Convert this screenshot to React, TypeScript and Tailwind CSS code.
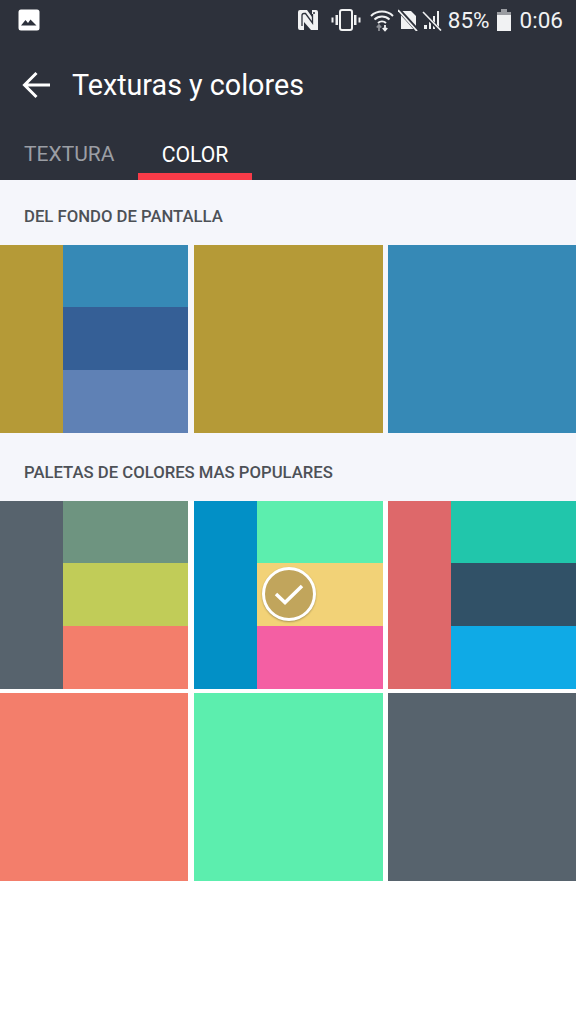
const Mixed = ({ a, b, c, d }: { a: string; b: string; c: string; d: string }) => (
  <div className="flex h-full w-full">
    <div className={`w-1/3 ${a}`} />
    <div className="flex flex-1 flex-col">
      <div className={`h-[62px] ${b}`} />
      <div className={`h-[63px] ${c}`} />
      <div className={`flex-1 ${d}`} />
    </div>
  </div>
);

const Row = ({ children }: { children: React.ReactNode }) => (
  <div className="grid h-[188px] grid-cols-[188px_189px_188px] gap-x-[5.5px]">{children}</div>
);

const StatusBar = () => (
  <div className="flex h-[40px] items-center justify-between pl-[18px] pr-[13px] text-[#f1f2f3]">
    <svg width="22" height="22" viewBox="0 0 22 22">
      <rect x="0.5" y="0.5" width="21" height="21" rx="2.5" fill="#fff" />
      <path d="M3 16.5 L7.5 11 L10 14 L12.5 10.5 L18.5 16.5 Z" fill="#2d313b" />
    </svg>
    <div className="flex items-center">
      <svg width="22" height="22" viewBox="0 0 22 22" className="mr-[12px]">
        <path d="M3 1 H10 L15 8 V1 H19 Q21 1 21 3 V21 H14 L7 13 V21 H3 Q1 21 1 19 V3 Q1 1 3 1 Z" fill="#f1f2f3" />
        <path d="M5 17 V6.5 Q5 4.5 7 4.5 H8.5 L15.5 14 V5 M16 4 H18" fill="none" stroke="#2d313b" strokeWidth="1.3" />
      </svg>
      <svg width="30" height="24" viewBox="0 0 30 24" className="mr-[9px]">
        <rect x="9" y="2" width="12" height="20" rx="2" fill="none" stroke="#f1f2f3" strokeWidth="2" />
        <rect x="4.5" y="7" width="2.5" height="10" fill="#f1f2f3" />
        <rect x="23" y="7" width="2.5" height="10" fill="#f1f2f3" />
        <rect x="0.5" y="9.5" width="2" height="5" fill="#f1f2f3" />
        <rect x="27.5" y="9.5" width="2" height="5" fill="#f1f2f3" />
      </svg>
      <svg width="24" height="24" viewBox="0 0 24 24" className="mr-[4px]">
        <path d="M1 8 A16 16 0 0 1 23 8 M4.5 11.5 A11 11 0 0 1 19.5 11.5 M8 15 A6 6 0 0 1 16 15" fill="none" stroke="#f1f2f3" strokeWidth="2" />
        <path d="M9 23 V18 M6.8 19.5 L9 17 L11.2 19.5" fill="none" stroke="#8d9096" strokeWidth="1.8" />
        <path d="M15 17 V22 M12.8 20 L15 22.5 L17.2 20" fill="none" stroke="#f1f2f3" strokeWidth="1.8" />
      </svg>
      <svg width="20" height="22" viewBox="0 0 20 22" className="mr-[4px]">
        <path d="M3 2 H13 L18 7 V20 H3 Z" fill="#f1f2f3" />
        <path d="M0 0 L19 21" stroke="#2d313b" strokeWidth="4" />
        <path d="M0 1 L19 22" stroke="#f1f2f3" strokeWidth="1.8" />
      </svg>
      <svg width="21" height="22" viewBox="0 0 21 22" className="mr-[5px]">
        <path d="M2 20 H5 V16 H2 Z M7 20 H9 V11 H7 Z M11 20 H13 V7 H11 Z M15 20 H17 V2 H15 Z" fill="#f1f2f3" />
        <path d="M0 3 L18 21.5" stroke="#2d313b" strokeWidth="3.4" />
        <path d="M1 3 L19 21.5" stroke="#f1f2f3" strokeWidth="1.6" />
      </svg>
      <span className="mr-[6px] font-['Roboto',sans-serif] text-[22.5px] leading-none">85%</span>
      <svg width="16" height="24" viewBox="0 0 16 24" className="mr-[8px]">
        <rect x="5" y="1" width="6" height="3" fill="#9a9ca1" />
        <rect x="1" y="4" width="14" height="3" fill="#9a9ca1" />
        <rect x="1" y="7" width="14" height="16" fill="#f1f2f3" />
      </svg>
      <span className="font-['Roboto',sans-serif] text-[22.5px] leading-none">0:06</span>
    </div>
  </div>
);

export default function App() {
  return (
    <div className="min-h-[1024px] bg-white font-['Roboto',sans-serif]">
      <div className="h-[180px] bg-[#2d313b]">
        <StatusBar />
        <div className="flex h-[90px] items-center pl-[22px]">
          <svg width="30" height="30" viewBox="0 0 30 30" fill="none" stroke="#fff" strokeWidth="3" className="mr-[20px]">
            <path d="M28 15 H3 M14.5 3 L2.5 15 L14.5 27" />
          </svg>
          <span className="text-[28.7px] leading-none text-white">Texturas y colores</span>
        </div>
        <div className="flex h-[50px]">
          <div className="flex w-[138px] items-center pb-[1px] pl-[24px] text-[21px] leading-none text-[#9b9ea4]">TEXTURA</div>
          <div className="flex w-[114px] items-center justify-center border-b-[7px] border-[#f83b48] pt-[6px] text-[21.2px] leading-none text-white">COLOR</div>
        </div>
      </div>

      <div className="bg-[#f5f6fb]">
        <div className="flex h-[65px] items-center pt-[10px] pl-[24px] text-[16.7px] leading-none font-medium text-[#4d5157]">DEL FONDO DE PANTALLA</div>
        <Row>
          <Mixed a="bg-[#b59a37]" b="bg-[#3689b6]" c="bg-[#355f96]" d="bg-[#5f81b5]" />
          <div className="bg-[#b59a37]" />
          <div className="bg-[#3689b6]" />
        </Row>
        <div className="flex h-[68px] items-center pt-[12px] pl-[24px] text-[16.7px] leading-none font-medium text-[#4d5157]">PALETAS DE COLORES MAS POPULARES</div>
      </div>

      <div className="flex flex-col gap-y-[4px]">
        <Row>
          <Mixed a="bg-[#57636d]" b="bg-[#6e9480]" c="bg-[#c1cc58]" d="bg-[#f37e6b]" />
          <div className="relative">
            <Mixed a="bg-[#0290c6]" b="bg-[#5ceeae]" c="bg-[#f2d277]" d="bg-[#f45fa3]" />
            <div className="absolute left-[68px] top-[66px] flex h-[54px] w-[54px] items-center justify-center rounded-full border-[3px] border-white bg-[#c1a55c] shadow-[0_1px_2px_rgba(0,0,0,0.3)]">
              <svg width="30" height="24" viewBox="0 0 30 24" fill="none" stroke="#fff" strokeWidth="3.5">
                <path d="M2 12 L11 20.5 L28 4" />
              </svg>
            </div>
          </div>
          <Mixed a="bg-[#de686a]" b="bg-[#21c6ab]" c="bg-[#315167]" d="bg-[#0faae6]" />
        </Row>
        <Row>
          <div className="bg-[#f37e6b]" />
          <div className="bg-[#5ceeae]" />
          <div className="bg-[#57636d]" />
        </Row>
      </div>
    </div>
  );
}
